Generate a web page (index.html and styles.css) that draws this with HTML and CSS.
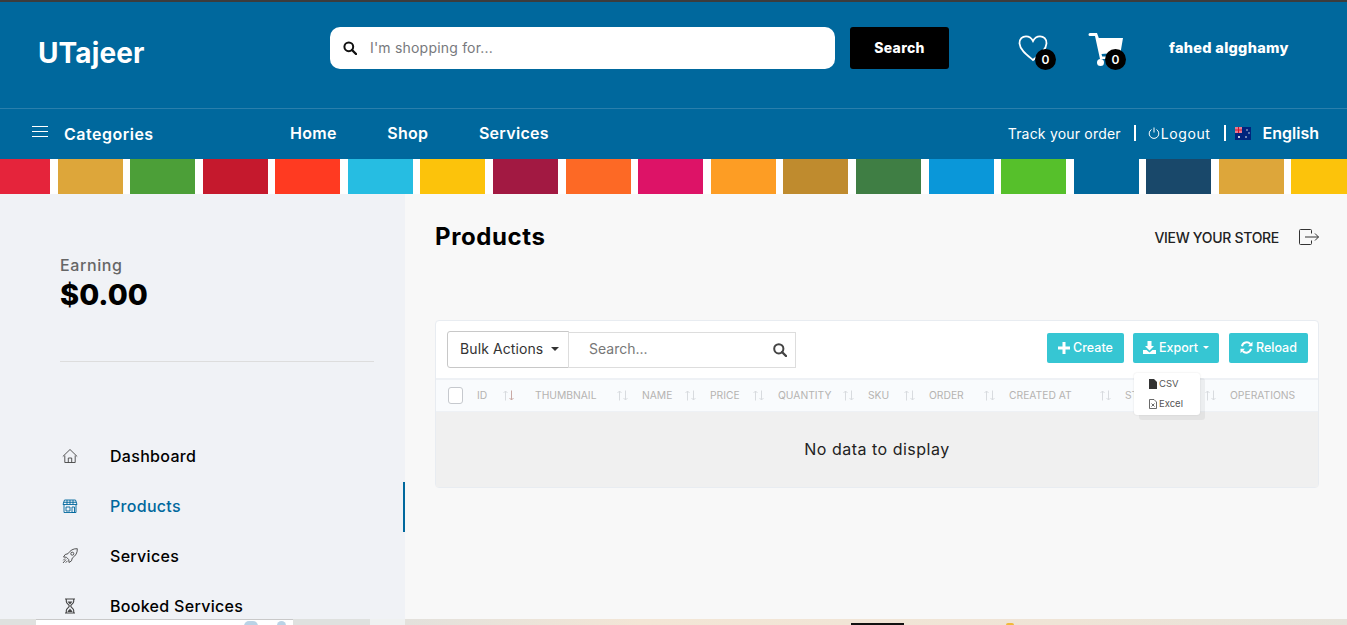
FILE: index.html
```html
<!DOCTYPE html>
<html lang="en">

<head>
    <meta charset="UTF-8">
    <meta name="viewport" content="width=device-width, initial-scale=1.0">
    <title>Products</title>
    <link rel="stylesheet" href="styles.css">
</head>

<body>
    <svg class="defs" width="0" height="0">
        <symbol id="sort-icon" viewBox="0 0 11 11">
            <path class="up" d="M2.500 10.500V1M.5 3l2-2 2 2" fill="none" stroke-width="1"/>
            <path class="down" d="M8.500 .5V10M6.500 8l2 2 2-2" fill="none" stroke-width="1"/>
        </symbol>
    </svg>

    <div class="top-line"></div>
    <header class="header">
        <a class="logo">UTajeer</a>
        <form class="search-form">
            <div class="search-box">
                <svg class="search-icon" viewBox="0 0 14 14"><circle cx="5.800" cy="5.800" r="4.400" fill="none" stroke="#111" stroke-width="2"/><path d="M9 9l4 4" stroke="#111" stroke-width="2.400" stroke-linecap="round"/></svg>
                <span class="search-hint">I'm shopping for...</span>
            </div>
            <button class="search-btn" type="button">Search</button>
        </form>
        <div class="header-icon heart">
            <svg viewBox="0 0 30 27" width="30" height="27"><path d="M15 25C9 20 2 15 1.500 8.500C1.200 4 4.500 1.300 8 1.300C11 1.300 13.500 3 15 6C16.500 3 19 1.300 22 1.300C25.500 1.300 28.800 4 28.500 8.500C28.200 15 21 20 15 25Z" fill="none" stroke="#fff" stroke-width="1.800"/></svg>
            <span class="badge">0</span>
        </div>
        <div class="header-icon cart">
            <svg viewBox="0 0 35 34" width="35" height="34"><path d="M.5 1.500a1.500 1.500 0 0 1 1.500-1.500h7l1.800 5H35l-2.500 14.500-19 1.500.7 2.500H30v2.500H12L7 3H2A1.500 1.500 0 0 1 .5 1.500Z" fill="#fff"/><circle cx="12.500" cy="29.500" r="3.500" fill="#fff"/><circle cx="28" cy="29.500" r="3.500" fill="#fff"/></svg>
            <span class="badge">0</span>
        </div>
        <span class="user-name">fahed algghamy</span>
    </header>

    <nav class="nav">
        <div class="categories">
            <svg viewBox="0 0 16 11" width="16" height="11"><path d="M0 .5h16M0 5.500h16M0 10.500h16" stroke="#fff"/></svg>
            <span>Categories</span>
        </div>
        <div class="nav-links">
            <a>Home</a>
            <a>Shop</a>
            <a>Services</a>
        </div>
        <div class="nav-right">
            <a class="track">Track your order</a>
            <span class="sep"></span>
            <a class="logout">
                <svg viewBox="0 0 12 12" width="12" height="12"><path d="M3.500 2.500a4.800 4.800 0 1 0 5 0M6 .5v5" fill="none" stroke="#fff"/></svg>
                Logout
            </a>
            <span class="sep sep-last"></span>
            <svg class="flag" viewBox="0 0 16 13" width="16" height="13"><rect width="16" height="13" fill="#00247d"/><rect width="7" height="6" fill="#e87a92"/><path d="M3.500 0v6M0 3h7" stroke="#cf142b"/><circle cx="4" cy="10" r="1" fill="#fff"/><circle cx="12" cy="3" r=".7" fill="#fff"/><circle cx="14" cy="6" r=".7" fill="#fff"/><circle cx="11" cy="10" r=".8" fill="#fff"/></svg>
            <a class="lang">English</a>
        </div>
    </nav>

    <div class="stripes">
        <i style="background:#e5243b"></i>
        <i style="background:#dda63a"></i>
        <i style="background:#4c9f38"></i>
        <i style="background:#c5192d"></i>
        <i style="background:#ff3a21"></i>
        <i style="background:#26bde2"></i>
        <i style="background:#fcc30b"></i>
        <i style="background:#a21942"></i>
        <i style="background:#fd6925"></i>
        <i style="background:#dd1367"></i>
        <i style="background:#fd9d24"></i>
        <i style="background:#bf8b2e"></i>
        <i style="background:#3f7e44"></i>
        <i style="background:#0a97d9"></i>
        <i style="background:#56c02b"></i>
        <i style="background:#00689d"></i>
        <i style="background:#19486a"></i>
        <i style="background:#dda63a"></i>
        <i style="background:#fcc30b"></i>
    </div>

    <div class="layout">
        <aside class="sidebar">
            <div class="earning-label">Earning</div>
            <div class="earning-value">$0.00</div>
            <hr class="side-rule">
            <ul class="side-menu">
                <li>
                    <svg viewBox="0 0 16 16" width="16" height="16"><path d="M.8 8.500L8 1.500l7.200 7M2.800 7.500V14.500h10.400V7.500M6.300 14.500V10h3.400v4.500" fill="none" stroke="#444" stroke-width=".9"/></svg>
                    Dashboard
                </li>
                <li class="active">
                    <svg viewBox="0 0 16 16" width="16" height="16"><path d="M2.500 2h11l1.500 4.500H1ZM2 6.500v8h12v-8M5 2v4.500M8 2v4.500M11 2v4.500M1.500 4.300h13M4 9h4v4H4ZM10 9h2.500v5.500H10Z" fill="none" stroke="#00689d" stroke-width=".9"/></svg>
                    Products
                </li>
                <li>
                    <svg viewBox="0 0 16 16" width="16" height="16"><path d="M15.300.7c-4-.2-7 1.500-9.300 5L3.200 6.500 1.500 9l3 .3 2.200 2.200.3 3 2.500-1.700.8-2.800c3.500-2.300 5.200-5.300 5-9.300ZM4 11.500L1 15M3 10.500L1.300 12.300M5.500 12.800L3.700 14.700" fill="none" stroke="#444" stroke-width=".9"/><circle cx="10.300" cy="5.700" r="1.500" fill="none" stroke="#444" stroke-width=".9"/></svg>
                    Services
                </li>
                <li>
                    <svg viewBox="0 0 16 16" width="16" height="16"><path d="M3 1h10M3 15h10M4.300 1v2.500c0 2 3 3 3 4.500s-3 2.500-3 4.500V15M11.700 1v2.500c0 2-3 3-3 4.500s3 2.500 3 4.500V15" fill="none" stroke="#444" stroke-width="1.100"/><path d="M5.500 14c0-1.500 2.500-2.500 2.500-3.500 0 1 2.500 2 2.500 3.500ZM5.500 3.500h5L8 6.500Z" fill="#444"/></svg>
                    Booked Services
                </li>
            </ul>
        </aside>

        <main class="content">
            <div class="page-head">
                <h1>Products</h1>
                <a class="store-link">
                    VIEW YOUR STORE
                    <svg viewBox="0 0 20 16" width="20" height="16"><path d="M12.500 4.500V1.500a1 1 0 0 0-1-1H1.500a1 1 0 0 0-1 1v13a1 1 0 0 0 1 1h10a1 1 0 0 0 1-1v-3M6 8h13.500M16 4.500L19.500 8 16 11.500" fill="none" stroke="#333"/></svg>
                </a>
            </div>

            <section class="table-card">
                <div class="toolbar">
                    <button class="bulk-btn" type="button">Bulk Actions <b class="caret"></b></button>
                    <div class="table-search">
                        <span>Search...</span>
                        <svg viewBox="0 0 14 14" width="14" height="14"><circle cx="5.800" cy="5.800" r="4.600" fill="none" stroke="#444" stroke-width="2"/><path d="M9 9l4 4" stroke="#444" stroke-width="2.400" stroke-linecap="round"/></svg>
                    </div>
                    <div class="actions">
                        <button class="action-btn create" type="button">
                            <svg viewBox="0 0 12 12" width="12" height="12"><path d="M4.500 0h3v4.500H12v3H7.500V12h-3V7.500H0v-3h4.500Z" fill="#fff"/></svg>
                            Create
                        </button>
                        <button class="action-btn export" type="button">
                            <svg viewBox="0 0 13 13" width="13" height="13"><path d="M4.500 0h4v5H11L6.500 9.500 2 5h2.500ZM0 9h3.500l3 2.500 3-2.500H13v4H0Z" fill="#fff"/></svg>
                            Export <b class="caret small"></b>
                        </button>
                        <button class="action-btn reload" type="button">
                            <svg viewBox="0 0 13 13" width="13" height="13"><path d="M2 5.200A4.800 4.800 0 0 1 10.300 3M11 7.800A4.800 4.800 0 0 1 2.700 10" fill="none" stroke="#fff" stroke-width="2"/><path d="M12.500.8v4.400H8.100ZM.5 12.200V7.800h4.400Z" fill="#fff"/></svg>
                            Reload
                        </button>
                        <div class="export-menu">
                            <div>
                                <svg viewBox="0 0 8 10" width="8" height="10"><path d="M0 0h5l3 3v7H0Z" fill="#333"/></svg>
                                CSV
                            </div>
                            <div>
                                <svg viewBox="0 0 8 10" width="8" height="10"><path d="M.5.500h4.500l2.500 2.500v6.500h-7ZM2.500 4.500l3 3M5.500 4.500l-3 3" fill="none" stroke="#444" stroke-width=".8"/></svg>
                                Excel
                            </div>
                        </div>
                    </div>
                </div>

                <div class="table-head">
                    <div class="cell"><span class="check"></span></div>
                    <div class="cell id-cell">ID <svg class="sort sorted"><use href="#sort-icon"/></svg></div>
                    <div class="cell">THUMBNAIL <svg class="sort"><use href="#sort-icon"/></svg></div>
                    <div class="cell">NAME <svg class="sort"><use href="#sort-icon"/></svg></div>
                    <div class="cell">PRICE <svg class="sort"><use href="#sort-icon"/></svg></div>
                    <div class="cell">QUANTITY <svg class="sort"><use href="#sort-icon"/></svg></div>
                    <div class="cell">SKU <svg class="sort"><use href="#sort-icon"/></svg></div>
                    <div class="cell">ORDER <svg class="sort"><use href="#sort-icon"/></svg></div>
                    <div class="cell">CREATED AT <svg class="sort"><use href="#sort-icon"/></svg></div>
                    <div class="cell">STATUS <svg class="sort"><use href="#sort-icon"/></svg></div>
                    <div class="cell">OPERATIONS</div>
                </div>
                <div class="table-empty">No data to display</div>
            </section>
        </main>
    </div>

    <div class="bottom-strip">
        <div class="strip-a"></div>
        <div class="strip-b"><i></i><i></i></div>
        <div class="strip-c"></div>
        <div class="strip-d"></div>
        <div class="strip-e"><i class="strip-black"></i><i class="strip-dot"></i></div>
    </div>
</body>

</html>
```

FILE: styles.css
```css
* {
    box-sizing: border-box;
}

html,
body {
    height: 100%;
}

body {
    display: flex;
    flex-direction: column;
    height: 100vh;
    margin: 0;
    overflow: hidden;
    background-color: #f8f8f8;
    color: #000;
    font-family: Inter, "Liberation Sans", sans-serif;
}

button {
    font-family: inherit;
    cursor: pointer;
}

.defs {
    position: absolute;
}

.top-line {
    flex: none;
    height: 2px;
    background-color: #3c3c3c;
}

/* header */
.header {
    flex: none;
    display: flex;
    align-items: flex-start;
    height: 107px;
    padding: 25px 0 0 38px;
    background-color: #00689d;
    border-bottom: 1px solid #2a7fac;
    color: #fff;
}

.logo {
    width: 292px;
    margin-top: 8px;
    font-size: 28px;
    line-height: 36px;
    font-weight: 700;
    letter-spacing: .1px;
}

.search-form {
    display: flex;
    gap: 15px;
    width: 688px;
}

.search-box {
    display: flex;
    align-items: center;
    width: 505px;
    height: 42px;
    padding-left: 13px;
    background-color: #fff;
    border-radius: 10px;
}

.search-icon {
    width: 14px;
    height: 14px;
    margin-right: 13px;
}

.search-hint {
    padding-bottom: 2px;
    font-size: 14px;
    color: #77797d;
    letter-spacing: .2px;
}

.search-btn {
    width: 99px;
    height: 42px;
    padding: 0 0 2px;
    border: 0;
    border-radius: 3px;
    background-color: #000;
    color: #fff;
    font-size: 14px;
    font-weight: 800;
    letter-spacing: .3px;
}

.header-icon {
    position: relative;
    margin-top: 6px;
}

.heart {
    width: 70px;
    margin-top: 8px;
}

.cart {
    width: 81px;
}

.badge {
    position: absolute;
    width: 21px;
    height: 21px;
    border-radius: 50%;
    background-color: #000;
    color: #fff;
    font-size: 12px;
    font-weight: 600;
    line-height: 21px;
    text-align: center;
}

.heart .badge {
    top: 14px;
    left: 17px;
}

.cart .badge {
    top: 16px;
    left: 17px;
}

.user-name {
    margin-top: 12px;
    font-size: 14.500px;
    line-height: 18px;
    font-weight: 800;
    letter-spacing: .3px;
    white-space: nowrap;
}

/* nav row */
.nav {
    flex: none;
    display: flex;
    align-items: center;
    height: 50px;
    padding: 0 28px 2px 32px;
    background-color: #00689d;
    color: #fff;
    font-size: 16px;
    font-weight: 600;
}

.categories {
    display: flex;
    align-items: center;
    gap: 16px;
    width: 258px;
    letter-spacing: .5px;
}

.categories span {
    margin-top: 2px;
}

.categories svg {
    margin-top: -3px;
}

.nav-links {
    display: flex;
    gap: 50.500px;
    letter-spacing: .3px;
}

.nav-right {
    display: flex;
    align-items: center;
    margin-left: auto;
    font-size: 14px;
    font-weight: 400;
}

.track {
    letter-spacing: .2px;
}

.sep {
    width: 2px;
    height: 16px;
    margin: 0 12px 0 13px;
    background-color: #fff;
}

.sep-last {
    margin-right: 9px;
}

.logout {
    display: flex;
    align-items: center;
    gap: 1px;
    letter-spacing: .6px;
}

.flag {
    margin-right: 12px;
}

.lang {
    font-size: 16px;
    font-weight: 600;
}

/* coloured bar under nav */
.stripes {
    flex: none;
    display: flex;
    gap: 7.580px;
    height: 35px;
    background-color: #fff;
}

.stripes i {
    flex: 0 0 65px;
}

.stripes i:first-child {
    flex-basis: 50px;
}

.stripes i:last-child {
    flex: 1;
}

/* page body */
.layout {
    flex: 1;
    display: flex;
    min-height: 0;
}

.sidebar {
    flex: 0 0 405px;
    padding: 61px 0 0 60px;
    background-color: #f0f2f6;
}

.earning-label {
    font-size: 16px;
    line-height: 20px;
    font-weight: 500;
    color: #666;
    letter-spacing: .6px;
}

.earning-value {
    margin-top: 1px;
    font-size: 29px;
    line-height: 38px;
    font-weight: 800;
}

.side-rule {
    width: 314px;
    margin: 47px 0 0;
    border: 0;
    border-top: 1px solid #ddd;
}

.side-menu {
    margin: 70px 0 0;
    padding: 0;
    list-style: none;
}

.side-menu li {
    position: relative;
    display: flex;
    align-items: center;
    gap: 32px;
    height: 50px;
    padding: 0 0 2px 2px;
    font-size: 16px;
    font-weight: 500;
    letter-spacing: .3px;
}

.side-menu .active {
    color: #00689d;
}

.side-menu .active::after {
    content: "";
    position: absolute;
    top: 0;
    right: 0;
    width: 2px;
    height: 50px;
    background-color: #00689d;
}

.content {
    flex: 1;
    padding: 26px 28px 0 30px;
}

.page-head {
    display: flex;
    align-items: center;
    justify-content: space-between;
    height: 34px;
}

.page-head h1 {
    margin: 0 0 2px;
    font-size: 24px;
    font-weight: 700;
    letter-spacing: .6px;
}

.store-link {
    display: flex;
    align-items: center;
    gap: 20px;
    font-size: 14px;
    font-weight: 500;
    letter-spacing: -.3px;
    color: #222;
}

/* table card */
.table-card {
    margin-top: 66px;
    background-color: #fff;
    border: 1px solid #e8ecf1;
    border-radius: 4px;
}

.toolbar {
    display: flex;
    align-items: center;
    height: 57px;
    padding: 0 10px 0 11px;
}

.bulk-btn {
    display: flex;
    align-items: center;
    justify-content: space-between;
    width: 122px;
    height: 37px;
    padding: 0 9px 2px 12px;
    background-color: #fff;
    border: 1px solid #c8c8c8;
    border-radius: 3px 0 0 3px;
    color: #333;
    font-size: 14px;
    letter-spacing: .1px;
}

.caret {
    display: inline-block;
    border: 4px solid transparent;
    border-top-color: #333;
    border-bottom: 0;
}

.caret.small {
    border-top-color: #fff;
    border-width: 3px 3px 0;
    margin-left: 2px;
}

.table-search {
    display: flex;
    align-items: center;
    justify-content: space-between;
    width: 228px;
    height: 36px;
    margin-left: -1px;
    padding: 0 2px 2px 20px;
    border: 1px solid #ddd;
    color: #777;
    font-size: 14px;
}

.table-search svg {
    margin: 2px 6px 0 0;
}

.actions {
    position: relative;
    display: flex;
    gap: 9px;
    margin: -4px 0 0 auto;
}

.action-btn {
    display: flex;
    align-items: center;
    justify-content: center;
    gap: 3px;
    height: 30px;
    padding: 0;
    background-color: #36c6d3;
    border: 0;
    border-radius: 2px;
    color: #fff;
    font-size: 12.500px;
    font-weight: 500;
}

.create {
    width: 77px;
}

.export {
    width: 86px;
}

.reload {
    width: 79px;
    margin-left: 1px;
}

.export-menu {
    position: absolute;
    top: 40px;
    left: 87px;
    z-index: 2;
    width: 66px;
    height: 42px;
    padding-top: 1px;
    background-color: #fff;
    border-radius: 3px;
    box-shadow: 5px 5px 0 rgba(0, 0, 0, .05), 0 0 2px rgba(0, 0, 0, .12);
    color: #555;
    font-size: 9.500px;
}

.export-menu div {
    display: flex;
    align-items: center;
    gap: 2px;
    height: 20px;
    padding-left: 15px;
}

.table-head {
    display: grid;
    grid-template-columns: 29px 58px 107px 68px 68px 90px 61px 80px 116px 105px 1fr;
    align-items: center;
    height: 34px;
    padding: 0 0 1px 12px;
    background-color: #f9fbfd;
    border-top: 2px solid #eef1f5;
    border-bottom: 1px solid #eef1f5;
    color: #b5b3b1;
    font-size: 10.300px;
    font-weight: 400;
}

.cell {
    display: flex;
    align-items: center;
    justify-content: space-between;
    padding-right: 14px;
    white-space: nowrap;
}

.id-cell {
    padding-right: 21px;
}

.check {
    width: 17px;
    height: 17px;
    background-color: #fff;
    border: 1px solid #c6c9ce;
    border-radius: 3px;
}

.sort {
    --up: #d8dbdf;
    --down: #d8dbdf;
    flex: none;
    width: 11px;
    height: 11px;
}

.sorted {
    --down: #c9a9a4;
}

.up {
    stroke: var(--up);
}

.down {
    stroke: var(--down);
}

.table-empty {
    height: 75px;
    background-color: #f0f0f0;
    font-size: 16px;
    line-height: 75px;
    color: #222;
    text-align: center;
    letter-spacing: .5px;
}

/* bit of the next section showing at the fold */
.bottom-strip {
    flex: none;
    display: flex;
    height: 6px;
}

.bottom-strip div {
    position: relative;
}

.strip-a {
    width: 36px;
    background-color: #dfe1df;
}

.strip-b {
    width: 257px;
    background-color: #fff;
    border-top: 1px solid #c9c9c9;
}

.strip-b i {
    position: absolute;
    top: 1px;
    width: 9px;
    height: 5px;
    border-radius: 5px 5px 0 0;
    background-color: #b9d3e6;
}

.strip-b i:first-child {
    left: 208px;
    width: 14px;
}

.strip-b i:last-child {
    left: 241px;
}

.strip-c {
    width: 77px;
    background-color: #dfe1df;
}

.strip-d {
    width: 35px;
    background-color: #eff1f1;
}

.strip-e {
    flex: 1;
    background: linear-gradient(90deg, #e3e1dc, #f3e6d6 25%, #efe4d6 70%, #e6e2da);
}

.strip-black {
    position: absolute;
    top: 4px;
    left: 446px;
    width: 53px;
    height: 2px;
    background-color: #111;
}

.strip-dot {
    position: absolute;
    top: 4px;
    left: 601px;
    width: 8px;
    height: 2px;
    border-radius: 4px 4px 0 0;
    background-color: #f1b93a;
}
```
